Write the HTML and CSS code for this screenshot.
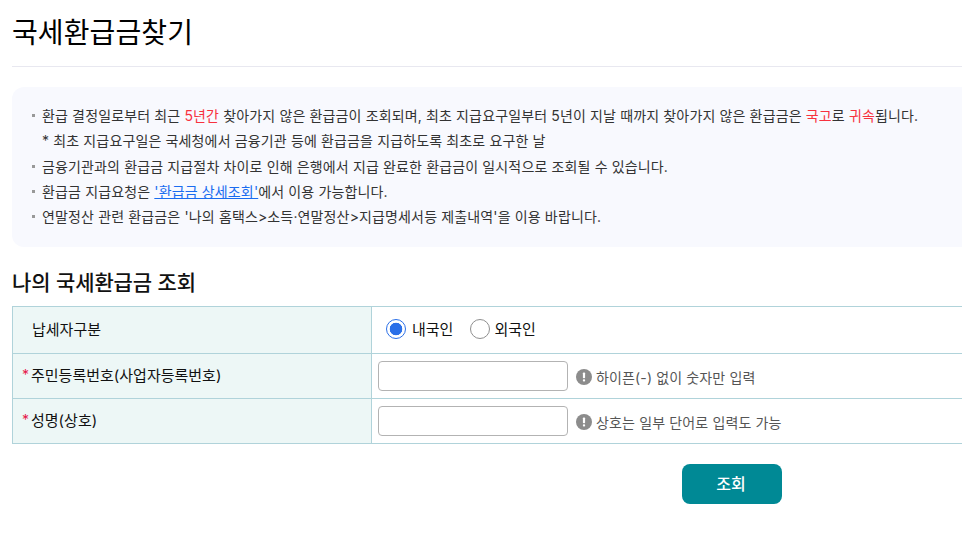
FILE: index.html
```html
<!DOCTYPE html>
<html lang="ko">
<head>
<meta charset="utf-8">
<title>국세환급금찾기</title>
<link rel="stylesheet" href="styles.css">
</head>
<body>
<main class="page">
  <div class="sheet">
  <h1 class="title">국세환급금찾기</h1>
  <section class="notice">
    <ul class="notes">
      <li>환급 결정일로부터 최근 <em>5년간</em> 찾아가지 않은 환급금이 조회되며, 최초 지급요구일부터 5년이 지날 때까지 찾아가지 않은 환급금은 <em>국고</em>로 <em>귀속</em>됩니다.</li>
      <li class="sub">* 최초 지급요구일은 국세청에서 금융기관 등에 환급금을 지급하도록 최초로 요구한 날</li>
      <li>금융기관과의 환급금 지급절차 차이로 인해 은행에서 지급 완료한 환급금이 일시적으로 조회될 수 있습니다.</li>
      <li>환급금 지급요청은 <a href="#">'환급금 상세조회'</a>에서 이용 가능합니다.</li>
      <li>연말정산 관련 환급금은 '나의 홈택스&gt;소득·연말정산&gt;지급명세서등 제출내역'을 이용 바랍니다.</li>
    </ul>
  </section>
  <h2 class="subtitle">나의 국세환급금 조회</h2>
  <div class="form">
    <div class="row first">
      <div class="label plain">납세자구분</div>
      <div class="field radios">
        <label class="radio"><span class="dot on"></span>내국인</label>
        <label class="radio"><span class="dot"></span>외국인</label>
      </div>
    </div>
    <div class="row">
      <div class="label"><span class="req">*</span>주민등록번호(사업자등록번호)</div>
      <div class="field">
        <input class="input" type="text">
        <span class="hint"><svg class="info" viewBox="0 0 16 16"><circle cx="8" cy="8" r="8" fill="#8c8c8c"/><rect x="6.9" y="3.4" width="2.2" height="5.8" rx="0.8" fill="#fff"/><rect x="6.9" y="10.3" width="2.2" height="2.2" rx="0.8" fill="#fff"/></svg>하이픈(-) 없이 숫자만 입력</span>
      </div>
    </div>
    <div class="row">
      <div class="label"><span class="req">*</span>성명(상호)</div>
      <div class="field">
        <input class="input" type="text">
        <span class="hint"><svg class="info" viewBox="0 0 16 16"><circle cx="8" cy="8" r="8" fill="#8c8c8c"/><rect x="6.9" y="3.4" width="2.2" height="5.8" rx="0.8" fill="#fff"/><rect x="6.9" y="10.3" width="2.2" height="2.2" rx="0.8" fill="#fff"/></svg>상호는 일부 단어로 입력도 가능</span>
      </div>
    </div>
  </div>
  <div class="actions"><button class="search" type="button">조회</button></div>
  </div>
</main>
</body>
</html>
```
FILE: styles.css
```css
* { box-sizing: border-box; }
html, body { margin: 0; padding: 0; background: #fff; overflow: hidden; height: 100%; }
body { font-family: Inter, "Noto Sans CJK KR", sans-serif; color: #222; }
.page { width: 950px; margin-left: 12px; overflow: hidden; }
.sheet { width: 1440px; }
.title { margin: 0; height: 67px; padding-top: 13px; font-size: 28px; line-height: 40px; font-weight: 400; letter-spacing: 0.1px; color: #000; border-bottom: 1px solid #e8e8f0; }
.notice { margin-top: 20px; height: 160px; padding: 16px 0 0 19px; background: #f8f9fe; border-radius: 12px; }
.notes { list-style: none; margin: 0; padding: 0; }
.notes li { position: relative; padding-left: 11px; font-size: 14px; line-height: 25px; letter-spacing: 0.14px; color: #333; white-space: nowrap; }
.notes li::before { content: ""; position: absolute; left: 1px; top: 11px; width: 3px; height: 3px; background: #999; }
.notes li.sub { line-height: 26px; }
.notes li.sub::before { display: none; }
.notes em { font-style: normal; color: #f7323f; }
.notes a { color: #1a6cf0; text-decoration: underline; }
.subtitle { margin: 22px 0 0; height: 37px; font-size: 21px; line-height: 28px; font-weight: 500; letter-spacing: -0.1px; color: #111; }
.form { border-top: 1px solid #b0d3da; border-left: 1px solid #b0d3da; }
.row { display: flex; height: 45px; border-bottom: 1px solid #b0d3da; }
.row.first { height: 47px; }
.label { flex: none; width: 359px; display: flex; align-items: center; padding-left: 9px; padding-bottom: 3px; background: #edf7f6; border-right: 1px solid #b0d3da; font-size: 15px; color: #111; }
.label.plain { padding-left: 19px; }
.req { color: #e6194b; margin-right: 2px; font-size: 14px; }
.field { flex: 1; display: flex; align-items: center; padding-left: 6px; }
.radios { padding-left: 14px; gap: 17px; }
.radio { display: flex; align-items: center; gap: 6px; font-size: 15px; color: #111; padding-bottom: 4px; }
.radio + .radio { gap: 4px; }
.dot { width: 20px; height: 20px; margin-top: 2px; border-radius: 50%; border: 1px solid #8f8f8f; background: #fff; }
.dot.on { border-color: #2a6fe8; background: radial-gradient(circle, #2a6fe8 0 6px, #fff 6.6px); }
.input { width: 190px; height: 30px; border: 1px solid #b3b3b3; border-radius: 4px; background: #fff; padding: 0 8px; margin-bottom: 1px; }
.hint { display: flex; align-items: center; margin-left: 8px; gap: 4px; font-size: 14px; letter-spacing: 0.14px; color: #555; padding-top: 2px; }
.info { width: 16px; height: 16px; flex: none; }
.actions { display: flex; justify-content: center; margin-top: 20px; }
.search { width: 100px; height: 40px; border: 0; border-radius: 8px; padding: 0 2px 2px 0; background: #008995; color: #fff; font-family: inherit; font-size: 16px; font-weight: 500; }
```
